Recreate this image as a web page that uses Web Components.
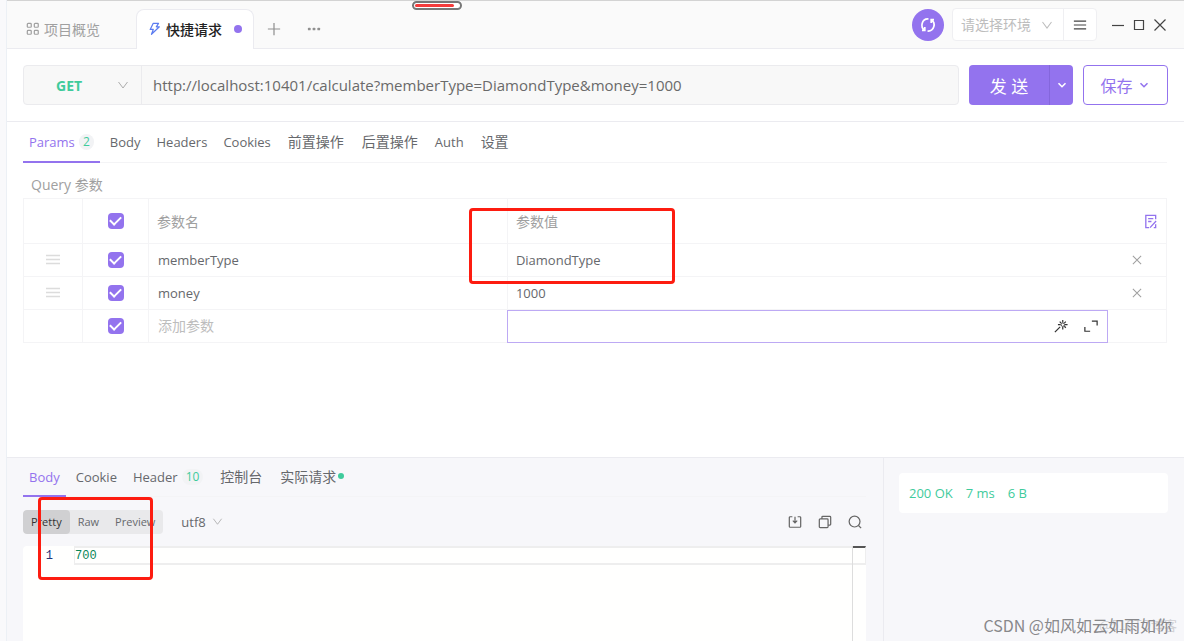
<!DOCTYPE html>
<html lang="zh-CN">
<head>
<meta charset="utf-8">
<title>快捷请求</title>
<style>
  body {
    margin: 0;
    font-family: "Open Sans", "Noto Sans CJK SC", sans-serif;
    font-size: 14px;
    color: #66686c;
    --accent: #9373ee;
    --line: #ebebf0;
    --soft-line: #f4f4f6;
    --green: #3fcb9c;
    --muted: #a0a0a0;
    --panel: #f7f7fa;
  }
</style>
</head>
<body>
<api-app></api-app>
<script>
const define = (name, html, setup) => {
  const template = document.createElement('template');
  template.innerHTML = html;
  customElements.define(name, class extends HTMLElement {
    constructor() {
      super();
      this.attachShadow({ mode: 'open' }).append(template.content.cloneNode(true));
    }
    connectedCallback() {
      if (setup) setup(this, this.shadowRoot);
    }
  });
};

const RESET = `
  * { box-sizing: border-box; }
  button, input, select { font: inherit; color: inherit; background: none; border: 0; margin: 0; padding: 0; outline: 0; border-radius: 0; }
  button { display: inline-flex; align-items: center; justify-content: center; cursor: pointer; }
  select { appearance: none; cursor: pointer; }
`;

const ICONS = {
  grid: '<rect x="1.5" y="1.5" width="4.5" height="4.5" rx="1"/><rect x="9.5" y="1.5" width="4.5" height="4.5" rx="1"/><rect x="1.5" y="9.5" width="4.5" height="4.5" rx="1"/><rect x="9.5" y="9.5" width="4.5" height="4.5" rx="1"/>',
  bolt: '<path d="M6 1.5H12L9.5 5.5H13L4 14L6 8.5H2.5Z" stroke-linejoin="round"/>',
  plus: '<path d="M8 1V15M1 8H15"/>',
  more: '<g fill="currentColor" stroke="none"><rect x="1" y="6.5" width="3.2" height="3" rx="1"/><rect x="6.4" y="6.5" width="3.2" height="3" rx="1"/><rect x="11.8" y="6.5" width="3.2" height="3" rx="1"/></g>',
  sync: '<path d="M5 13.2A6 6 0 0 1 8.5 2M11 2.8A6 6 0 0 1 7.5 14M11.2 6V2.6H14M4.8 10V13.4H2"/>',
  down: '<path d="M2 4L8 12L14 4"/>',
  chevron: '<path d="M4 6L8 10L12 6"/>',
  menu: '<path d="M1 3.5H15M1 8H15M1 12.5H15"/>',
  minimize: '<path d="M2 8.5H14"/>',
  maximize: '<path d="M3.5 3.5H12.5V12.5H3.5Z"/>',
  close: '<path d="M2.5 2.5L13.5 13.5M13.5 2.5L2.5 13.5"/>',
  drag: '<path d="M1 3.5H15M1 7.5H15M1 11.5H15"/>',
  edit: '<path d="M6.5 14.5H3V1.5H13.5V5.5M5.5 5H11M5.5 8H9M14 7.5L7.5 14.5M11.5 14.5H13.5V11"/>',
  wand: '<path d="M1 15L7 9"/><path d="M10 1V4M10 9V12M4.5 6.5H7.5M12.5 6.5H15.5M6.5 3L8.2 4.7M13.5 3L11.8 4.7M13.5 10L11.8 8.3"/><circle cx="10" cy="6.5" r="2" stroke-width="1"/>',
  expand: '<path d="M9 2.5H15V7.5M7 14H1V9"/>',
  save: '<path d="M5 2H2.5Q1.5 2 1.5 3V13Q1.5 14 2.5 14H13.5Q14.5 14 14.5 13V3Q14.5 2 13.5 2H11M8 2V9M5.5 6.5L8 9L10.5 6.5"/>',
  copy: '<rect x="1.5" y="4.5" width="10" height="10" rx="1"/><path d="M4.5 4.5V2.5Q4.5 1.5 5.5 1.5H13.5Q14.5 1.5 14.5 2.5V10.5Q14.5 11.5 13.5 11.5H11.5"/>',
  search: '<circle cx="7.5" cy="7.5" r="6.2"/><path d="M12 12L15 15"/>'
};

define('ui-icon', `
<style>
  :host { display: inline-flex; flex: none; width: 16px; height: 16px; }
  svg { width: 100%; height: 100%; fill: none; stroke: currentColor; stroke-width: var(--stroke, 1.4); overflow: visible; }
</style>
<svg viewBox="0 0 16 16" aria-hidden="true"></svg>`, (host, root) => {
  root.querySelector('svg').innerHTML = ICONS[host.getAttribute('name')];
});

define('red-frame', `
<style>
  :host { display: block; position: absolute; box-sizing: border-box; border: 3px solid #fd1c10; border-radius: 4px; pointer-events: none; z-index: 2; }
</style>`);

define('page-tab', `
<style>${RESET}
  :host { display: flex; color: var(--muted); }
  button { padding: 0 16px 2px 18px; gap: 4px; border: 1px solid transparent; border-bottom: 0; margin-bottom: -1px; border-radius: 8px 8px 0 0; }
  :host([active]) { margin-left: 19px; }
  :host([active]) button { background: #fff; border-color: var(--line); color: #222; font-weight: 500; padding: 0 11px 2px; }
</style>
<button role="tab"><slot></slot></button>`);

define('top-bar', `
<style>${RESET}
  :host { display: flex; position: relative; height: 47px; border-top: 1px solid #d3d3d3; border-bottom: 1px solid var(--line); background: #fafafa; align-items: stretch; }
  .tabs { display: flex; padding: 8px 0 0; flex: 1; }
  page-tab ui-icon { width: 14px; height: 14px; }
  .bolt { color: #5c7cf0; }
  .dot { width: 8px; height: 8px; border-radius: 50%; background: var(--accent); margin-left: 8px; }
  .tool { width: 40px; color: #909090; }
  .tool ui-icon { width: 14px; height: 14px; }
  .right { display: flex; align-items: center; padding-right: 14px; }
  .sync { width: 32px; height: 32px; border-radius: 50%; background: var(--accent); color: #fff; --stroke: 1.7; }
  .env { display: flex; width: 145px; height: 33px; margin: 0 10px 0 8px; border: 1px solid #efeff2; border-radius: 4px; background: #fff; }
  .pick { flex: 1; display: grid; grid-template-columns: 1fr 12px; align-items: center; padding: 0 10px 0 8px; color: #bdbdbd; border-right: 1px solid #efeff2; }
  .pick select { grid-area: 1 / 1 / 2 / 3; height: 31px; }
  .pick ui-icon { grid-area: 1 / 2; width: 12px; height: 12px; pointer-events: none; }
  .env button { width: 32px; color: #444; }
  .env button ui-icon { width: 14px; height: 14px; }
  .win { width: 21px; height: 32px; color: #444; --stroke: 1.2; }
  .pill { position: absolute; top: 0; left: calc(35% - 7px); width: 50px; height: 9px; padding: 1px; border: 2px solid #777; border-radius: 5px; background: #fff; }
  .pill i { display: block; width: 39px; height: 3px; border-radius: 2px; background: #f43b3b; }
</style>
<div class="tabs" role="tablist">
  <page-tab><ui-icon name="grid"></ui-icon><span>项目概览</span></page-tab>
  <page-tab active><ui-icon class="bolt" name="bolt"></ui-icon><span>快捷请求</span><i class="dot"></i></page-tab>
  <button class="tool" aria-label="New tab"><ui-icon name="plus"></ui-icon></button>
  <button class="tool" aria-label="More"><ui-icon name="more"></ui-icon></button>
</div>
<div class="right">
  <button class="sync" aria-label="Sync"><ui-icon name="sync"></ui-icon></button>
  <div class="env">
    <div class="pick"><select aria-label="Environment"><option>请选择环境</option></select><ui-icon name="down"></ui-icon></div>
    <button aria-label="Manage environments"><ui-icon name="menu"></ui-icon></button>
  </div>
  <button class="win" aria-label="Minimize"><ui-icon name="minimize"></ui-icon></button>
  <button class="win" aria-label="Maximize"><ui-icon name="maximize"></ui-icon></button>
  <button class="win" aria-label="Close"><ui-icon name="close"></ui-icon></button>
</div>
<div class="pill"><i></i></div>`);

define('request-bar', `
<style>${RESET}
  :host { display: flex; gap: 10px; padding: 16px; border-bottom: 1px solid var(--line); }
  .url { flex: 1; display: flex; height: 40px; border: 1px solid #ebebee; border-radius: 4px; background: #f8f8f8; }
  .method { display: grid; grid-template-columns: 1fr 12px; align-items: center; width: 118px; padding: 0 12px 0 32px; border-right: 1px solid #ebebee; color: var(--green); font-weight: 700; }
  .method select { grid-area: 1 / 1 / 2 / 3; height: 38px; }
  .method ui-icon { grid-area: 1 / 2; width: 12px; height: 12px; color: #aaa; pointer-events: none; --stroke: 1.3; }
  .url input { flex: 1; min-width: 0; padding: 0 11px; font-size: 15px; color: #6a6a6a; }
  .send { display: flex; height: 40px; border-radius: 4px; background: var(--accent); color: #fff; }
  .send button:first-child { width: 80px; font-size: 17px; }
  .send button:last-child { width: 24px; border-left: 1px solid #8466dc; }
  ui-icon { width: 14px; height: 14px; --stroke: 1.8; }
  .save { width: 85px; height: 40px; gap: 4px; border: 1px solid var(--accent); border-radius: 4px; color: var(--accent); font-size: 16px; }
</style>
<div class="url">
  <div class="method"><select aria-label="Method"><option>GET</option></select><ui-icon name="down"></ui-icon></div>
  <input aria-label="URL" value="http://localhost:10401/calculate?memberType=DiamondType&amp;money=1000">
</div>
<div class="send"><button>发 送</button><button aria-label="Send options"><ui-icon name="chevron"></ui-icon></button></div>
<button class="save">保存<ui-icon name="chevron"></ui-icon></button>`);

define('tab-item', `
<style>${RESET}
  :host { display: flex; }
  button { height: 100%; padding: 0 6px 2px; gap: 4px; font-size: 13px; white-space: nowrap; border-bottom: 2px solid transparent; border-top: 2px solid transparent; }
  :host([cjk]) button { font-size: 14px; padding: 0 7px 4px; }
  :host([active]) button { color: var(--accent); border-bottom-color: var(--accent); }
  .count { min-width: 15px; height: 16px; padding: 0 4px; border-radius: 8px; background: #f2f3f5; color: var(--green); font-size: 12px; line-height: 16px; text-align: center; }
  .dot { width: 6px; height: 6px; margin-left: -2px; border-radius: 50%; background: var(--green); }
  [hidden] { display: none; }
</style>
<button role="tab"><slot></slot><span class="count" hidden></span><i class="dot" hidden></i></button>`, (host, root) => {
  const count = root.querySelector('.count');
  count.textContent = host.getAttribute('count') || '';
  count.hidden = !host.hasAttribute('count');
  root.querySelector('.dot').hidden = !host.hasAttribute('dot');
});

define('tab-strip', `
<style>
  :host { display: flex; height: 41px; box-sizing: border-box; }
  ::slotted(*) { height: 100%; }
  div { display: flex; flex: 1; gap: 4px; box-shadow: inset 0 -1px var(--soft-line); }
</style>
<div role="tablist"><slot></slot></div>`);

define('params-table', `
<style>${RESET}
  :host { display: block; }
  h2 { margin: 0; padding: 12px 8px 3px; font-size: 14px; line-height: 20px; font-weight: 400; color: var(--muted); }
  table { width: 100%; border-collapse: collapse; table-layout: fixed; font-size: 13px; }
  th, td { position: relative; height: 33px; padding: 0; border: 1px solid var(--soft-line); text-align: center; vertical-align: middle; font-weight: 400; }
  th { height: 45px; color: var(--muted); font-size: 14px; }
  th.label { text-align: left; padding: 0 8px; }
  th:nth-child(4), td:nth-child(4) { border-right-style: none; }
  th:last-child, td:last-child { border-left-style: none; }
  col.drag { width: 59px; } col.tick { width: 66px; } col.name { width: 31.4%; } col.end { width: 59px; }
  td > input:not([type]) { display: block; width: 100%; height: 31px; padding: 0 9px; }
  td:nth-child(4) > input:not([type]) { padding: 0 8px; }
  input::placeholder { color: #bdbdbd; opacity: 1; font-size: 14px; }
  input[type=checkbox] { appearance: none; display: grid; place-items: center; width: 16px; height: 16px; margin: 0 auto; border-radius: 4px; background: var(--accent); }
  input[type=checkbox]::after { content: ""; width: 9px; height: 5px; margin-bottom: 3px; border: solid #fff; border-width: 0 0 2px 2px; transform: rotate(-45deg); }
  .grip { display: flex; margin: 0 auto; color: #dcdcdc; }
  th button { display: flex; margin: 0 8px 0 auto; color: var(--accent); }
  th ui-icon { width: 15px; height: 15px; }
  td button { display: flex; margin: 0 auto; color: #a0a0a0; }
  td button ui-icon { width: 12px; height: 12px; }
  td.active { outline: 1px solid #bda9f4; outline-offset: -1px; }
  .edit { display: flex; align-items: center; gap: 16px; padding-right: 10px; }
  .edit input { flex: 1; min-width: 0; height: 31px; padding: 0 9px; }
  .edit button { color: #333; margin: 0; }
  .edit ui-icon { width: 14px; height: 14px; }
  .value red-frame { top: 9px; left: -39px; width: 206px; height: 76px; }
</style>
<h2>Query 参数</h2>
<table>
  <colgroup><col class="drag"><col class="tick"><col class="name"><col><col class="end"></colgroup>
  <thead>
    <tr><th></th><th><input type="checkbox" checked aria-label="全选"></th><th class="label">参数名</th><th class="label value">参数值<red-frame></red-frame></th><th><button aria-label="批量编辑"><ui-icon name="edit"></ui-icon></button></th></tr>
  </thead>
  <tbody>
    <tr><td><ui-icon class="grip" name="drag"></ui-icon></td><td><input type="checkbox" checked aria-label="memberType"></td><td><input aria-label="参数名" value="memberType"></td><td><input aria-label="参数值" value="DiamondType"></td><td><button aria-label="删除"><ui-icon name="close"></ui-icon></button></td></tr>
    <tr><td><ui-icon class="grip" name="drag"></ui-icon></td><td><input type="checkbox" checked aria-label="money"></td><td><input aria-label="参数名" value="money"></td><td><input aria-label="参数值" value="1000"></td><td><button aria-label="删除"><ui-icon name="close"></ui-icon></button></td></tr>
    <tr><td></td><td><input type="checkbox" checked aria-label="新参数"></td><td><input aria-label="参数名" placeholder="添加参数"></td><td class="active"><div class="edit"><input aria-label="参数值"><button aria-label="动态值"><ui-icon name="wand"></ui-icon></button><button aria-label="展开"><ui-icon name="expand"></ui-icon></button></div></td><td></td></tr>
  </tbody>
</table>`);

define('code-view', `
<style>
  :host { display: grid; grid-template-columns: 51px 1fr 14px; background: #fffffe; font: 12px/17px "Liberation Mono", monospace; border-radius: 4px 0 0 0; }
  .no { padding: 2px 21px 0 0; text-align: right; color: #237; }
  .line { height: 19px; box-sizing: border-box; border: solid #eee; border-width: 2px 0 2px 1px; color: #098658; }
  .ruler { border-left: 1px solid #ddd; }
  .ruler i { display: block; box-sizing: border-box; height: 19px; border: solid #eee; border-width: 0 1px 2px 0; border-top: 2px solid #555; }
</style>
<div class="no">1</div><div class="line"><slot></slot></div><div class="ruler"><i></i></div>`);

define('response-panel', `
<style>${RESET}
  :host { display: grid; grid-template-columns: 1fr 300px; min-height: 183px; border-top: 1px solid var(--line); background: var(--panel); position: relative; }
  .main { display: flex; flex-direction: column; padding: 0 17px 0 16px; border-right: 1px solid var(--line); min-width: 0; }
  .bar { display: flex; align-items: center; padding: 0 4px 0 0; height: 49px; }
  .views { display: flex; border-radius: 4px; background: #e9e9eb; overflow: hidden; font-size: 11px; }
  .views button { height: 24px; padding: 0 8px; border-radius: 4px; }
  .views button.on { background: #d0d0d2; color: #333; }
  .enc { display: grid; grid-template-columns: 1fr 12px; align-items: center; width: 43px; margin-left: 18px; font-size: 13px; }
  .enc select { grid-area: 1 / 1 / 2 / 3; }
  .enc ui-icon { grid-area: 1 / 2; width: 11px; height: 11px; color: #aaa; pointer-events: none; --stroke: 1.2; }
  .tools { display: flex; gap: 16px; margin-left: auto; color: #666; }
  .tools ui-icon { width: 14px; height: 14px; }
  code-view { flex: 1; }
  tab-strip { height: 39px; }
  aside { padding: 15px 16px 15px 15px; }
  .status { display: flex; gap: 13px; height: 40px; padding: 0 10px; align-items: center; border-radius: 4px; background: #fff; color: var(--green); font-size: 13px; }
  red-frame { top: 39px; left: 31px; width: 115px; height: 83px; }
</style>
<section class="main">
  <tab-strip>
    <tab-item active>Body</tab-item><tab-item>Cookie</tab-item><tab-item count="10">Header</tab-item><tab-item cjk>控制台</tab-item><tab-item cjk dot>实际请求</tab-item>
  </tab-strip>
  <div class="bar">
    <div class="views"><button class="on">Pretty</button><button>Raw</button><button>Preview</button></div>
    <div class="enc"><select aria-label="Encoding"><option>utf8</option></select><ui-icon name="down"></ui-icon></div>
    <div class="tools"><button aria-label="Download"><ui-icon name="save"></ui-icon></button><button aria-label="Copy"><ui-icon name="copy"></ui-icon></button><button aria-label="Search"><ui-icon name="search"></ui-icon></button></div>
  </div>
  <code-view>700</code-view>
</section>
<aside><div class="status"><span>200 OK</span><span>7 ms</span><span>6 B</span></div></aside>
<red-frame></red-frame>`);

define('water-mark', `
<style>
  :host { position: absolute; right: 0; bottom: 0; display: grid; justify-items: end; align-items: center; white-space: nowrap; font-family: "Noto Sans CJK SC", sans-serif; line-height: 24px; padding: 0 7px 4px 0; pointer-events: none; }
  span { grid-area: 1 / 1; }
  .author { font-size: 16px; color: #88888b; padding-right: 5px; }
  .site { font-size: 13px; color: #cfcfd3; }
</style>
<span class="site">@51CTO博客</span><span class="author"><slot></slot></span>`);

define('api-app', `
<style>
  :host { display: flex; flex-direction: column; position: relative; min-height: 100vh; box-sizing: border-box; padding-left: 6px; background: #f9f9fb; }
  main { flex: 1; display: flex; flex-direction: column; border-left: 1px solid #ecf0f5; background: #fff; }
  .params { flex: 1; padding: 0 17px 16px 16px; }
</style>
<main>
  <top-bar></top-bar>
  <request-bar></request-bar>
  <div class="params">
    <tab-strip>
      <tab-item active count="2">Params</tab-item><tab-item>Body</tab-item><tab-item>Headers</tab-item><tab-item>Cookies</tab-item><tab-item cjk>前置操作</tab-item><tab-item cjk>后置操作</tab-item><tab-item>Auth</tab-item><tab-item cjk>设置</tab-item>
    </tab-strip>
    <params-table></params-table>
  </div>
  <response-panel></response-panel>
</main>
<water-mark>CSDN @如风如云如雨如你</water-mark>`);
</script>
</body>
</html>
